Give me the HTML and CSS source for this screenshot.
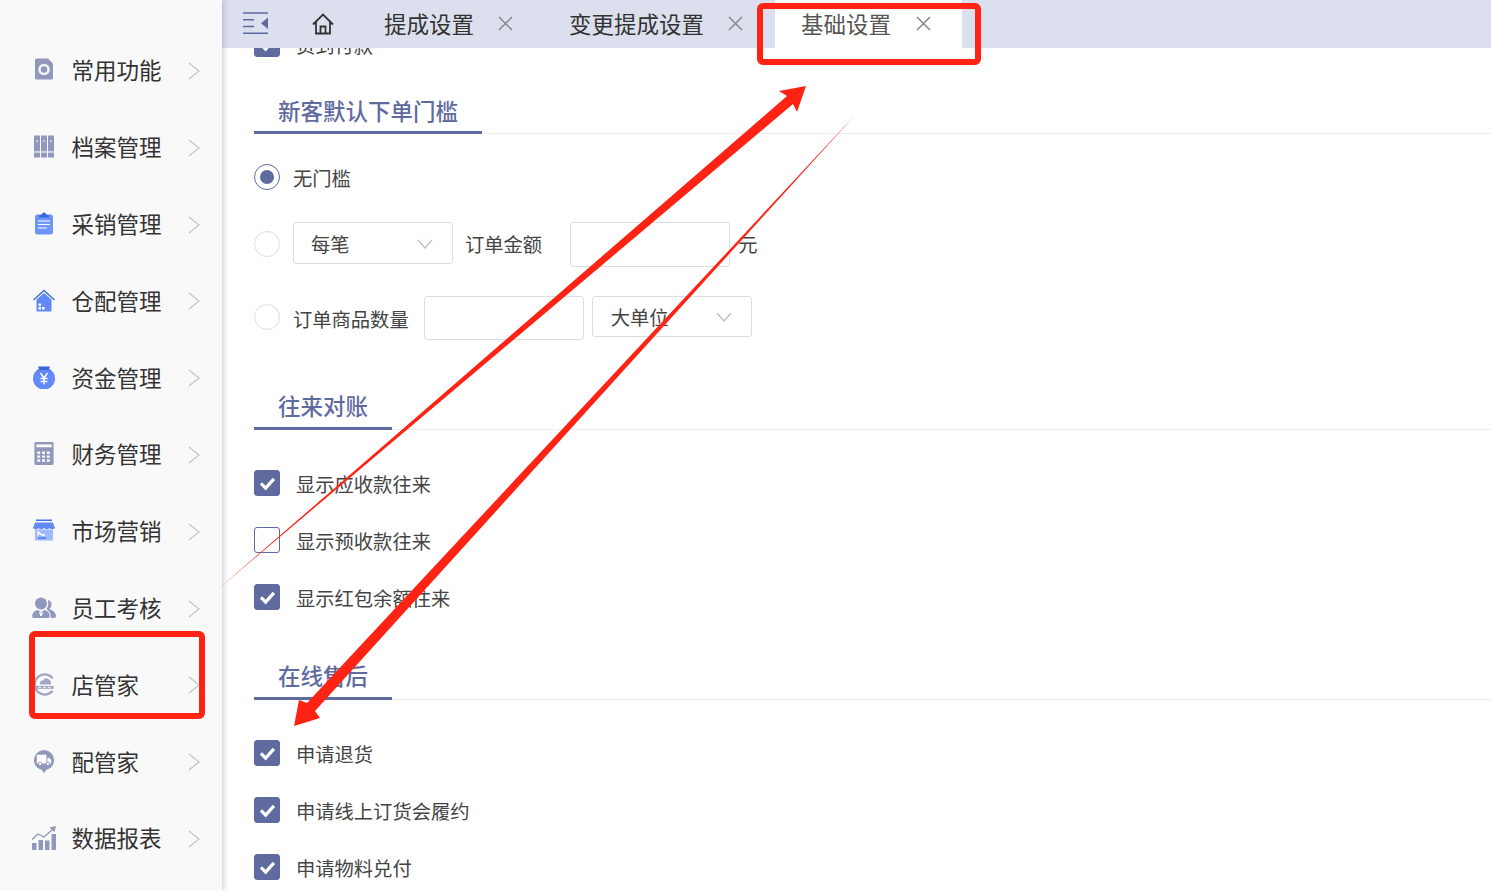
FILE: index.html
```html
<!DOCTYPE html>
<html lang="zh-CN">
  <head>
    <meta charset="UTF-8" />
    <title>基础设置</title>
    <link rel="stylesheet" href="styles.css">
  </head>
  <body>
    <div class="app">
      <!-- Sidebar -->
      <nav class="sidebar">
        <div class="menu-item">
          <svg class="menu-icon" viewBox="0 0 22 22"><path fill="#9198bb" d="M4 0H15L20 5V19.500Q20 21 18.500 21H3.500Q2 21 2 19.500V1.500Q2 0 4 0Z"/><circle cx="11" cy="11" r="4.500" fill="none" stroke="#f3f4f8" stroke-width="2.500"/></svg>
          <span class="menu-text">常用功能</span>
          <svg class="chevron" viewBox="0 0 12 20"><path d="M1 2L11 10L1 18"/></svg>
        </div>
        <div class="menu-item">
          <svg class="menu-icon" viewBox="0 0 22 22"><path fill="#9198bb" d="M1 0H7V22H1ZM8 0H14V22H8ZM15 0H21V22H15Z"/><path stroke="#f9f9f9" stroke-width="1.200" d="M1 16.500H21"/><path stroke="#f9f9f9" d="M3 5.500H5M10 5.500H12M17 5.500H19"/></svg>
          <span class="menu-text">档案管理</span>
          <svg class="chevron" viewBox="0 0 12 20"><path d="M1 2L11 10L1 18"/></svg>
        </div>
        <div class="menu-item">
          <svg class="menu-icon" viewBox="0 0 22 22"><rect x="2" y="2" width="18" height="20" rx="2.500" fill="#6f95f8"/><path fill="#3568d8" d="M6 2.500H8.500Q9 0 11 0T13.500 2.500H16V5H6Z"/><path stroke="#fff" stroke-width="1.200" d="M5 8.500H17M5 12H17M5 15.500H14"/></svg>
          <span class="menu-text">采销管理</span>
          <svg class="chevron" viewBox="0 0 12 20"><path d="M1 2L11 10L1 18"/></svg>
        </div>
        <div class="menu-item">
          <svg class="menu-icon" viewBox="0 0 22 22"><path fill="#6288f9" d="M3.500 10L11 3.500L18.500 10V21Q18.500 22 17.500 22H4.500Q3.500 22 3.500 21Z"/><path fill="none" stroke="#3568d8" stroke-width="1.300" d="M.500 10.500L11 1L21.500 10.500"/><path fill="#fff" d="M5.500 14H8V16.500H5.500ZM5.500 17.500H8V20H5.500ZM9 17.500H11.500V20H9Z"/></svg>
          <span class="menu-text">仓配管理</span>
          <svg class="chevron" viewBox="0 0 12 20"><path d="M1 2L11 10L1 18"/></svg>
        </div>
        <div class="menu-item">
          <svg class="menu-icon" viewBox="0 0 22 22"><circle cx="11" cy="12" r="11" fill="#6288f9"/><path fill="#3568d8" d="M5 0H17L15.500 3.500H6.500Z"/><path fill="none" stroke="#fff" stroke-width="1.400" d="M7.500 6.500L11 11.500L14.500 6.500M11 11.500V18M7.500 12H14.500M7.500 15H14.500"/></svg>
          <span class="menu-text">资金管理</span>
          <svg class="chevron" viewBox="0 0 12 20"><path d="M1 2L11 10L1 18"/></svg>
        </div>
        <div class="menu-item">
          <svg class="menu-icon" viewBox="0 0 22 24"><rect x="1" y="0" width="20" height="24" rx="1.500" fill="#9198bb"/><path fill="#fff" d="M3 2.500H19V5.500H3Z"/><path fill="#fff" d="M4 10H7V12.500H4ZM9 10H12V12.500H9ZM14 10H17V12.500H14ZM4 14H7V16.500H4ZM9 14H12V16.500H9ZM14 14H17V16.500H14ZM4 18H7V20.500H4ZM9 18H12V20.500H9ZM14 18H17V20.500H14Z"/></svg>
          <span class="menu-text">财务管理</span>
          <svg class="chevron" viewBox="0 0 12 20"><path d="M1 2L11 10L1 18"/></svg>
        </div>
        <div class="menu-item">
          <svg class="menu-icon" viewBox="0 0 22 22"><path fill="#3f74e8" d="M3 0H19V1.500H3Z"/><path fill="#6288f9" d="M2 3H20L22 8.500Q19 11 16.500 8.500Q14 11 11 8.500Q8 11 5.500 8.500Q3 11 0 8.500Z"/><rect x="2" y="10" width="18" height="11" fill="#9dbafa"/><path fill="none" stroke="#3f74e8" stroke-width="1.300" d="M5 18.500H13"/><path fill="none" stroke="#fff" stroke-width="1.500" d="M5 16V12.500L9 15.500H12"/></svg>
          <span class="menu-text">市场营销</span>
          <svg class="chevron" viewBox="0 0 12 20"><path d="M1 2L11 10L1 18"/></svg>
        </div>
        <div class="menu-item">
          <svg class="menu-icon icon-wide" viewBox="0 0 24 22"><path fill="#9198bb" d="M16 3Q20 4 19.500 8Q19 11 17 12Q23 13.500 24 19Q24 21 22 21H19Q19 15 14.500 12Q17 9 16 3Z"/><circle cx="9" cy="6.500" r="6" fill="#9198bb"/><path fill="#9198bb" d="M0 19Q1 13.500 6 13L9 15.500L12 13Q17 13.500 18 19Q18 21 16 21H2Q0 21 0 19Z"/><path fill="#f9f9f9" d="M7 15.500H11V17H10V19H8V17H7Z"/></svg>
          <span class="menu-text">员工考核</span>
          <svg class="chevron" viewBox="0 0 12 20"><path d="M1 2L11 10L1 18"/></svg>
        </div>
        <div class="menu-item">
          <svg class="menu-icon" viewBox="0 0 22 24"><path fill="none" stroke="#a0a6c4" stroke-width="2.300" d="M20 5.500A10.500 10.500 0 1 0 20 18.500"/><path fill="#a0a6c4" d="M7 12Q6 8 10 7.500Q12 4 15.500 6.500Q19 7.500 18 12Z"/><path fill="#a0a6c4" d="M2 13.500H21V16.500H2Z"/><path stroke="#f3f4f8" d="M5 15H8M10 15H13M15 15H18"/></svg>
          <span class="menu-text">店管家</span>
          <svg class="chevron" viewBox="0 0 12 20"><path d="M1 2L11 10L1 18"/></svg>
        </div>
        <div class="menu-item">
          <svg class="menu-icon" viewBox="0 0 22 24"><circle cx="11" cy="10.500" r="10.500" fill="#9198bb"/><path fill="#9198bb" d="M8 20H14L11 24Z"/><path fill="#fff" d="M3.500 5H13.500V14H3.500ZM14.500 8H16.500L18.500 10.500V14H14.500Z"/><circle cx="7" cy="14.500" r="1.800" fill="#fff" stroke="#9198bb"/><circle cx="15" cy="14.500" r="1.800" fill="#fff" stroke="#9198bb"/></svg>
          <span class="menu-text">配管家</span>
          <svg class="chevron" viewBox="0 0 12 20"><path d="M1 2L11 10L1 18"/></svg>
        </div>
        <div class="menu-item">
          <svg class="menu-icon icon-wide" viewBox="0 0 24 24"><path fill="#9198bb" d="M0 17H4.500V24H0ZM6.500 14H11V24H6.500ZM13 14.500H17.500V24H13ZM19.500 8H24V24H19.500Z"/><path fill="none" stroke="#9198bb" stroke-width="1.300" d="M0 13.500L6 8L12 11L21 3"/><path fill="#9198bb" d="M17.500 1.500L24 0L22.500 6Z"/></svg>
          <span class="menu-text">数据报表</span>
          <svg class="chevron" viewBox="0 0 12 20"><path d="M1 2L11 10L1 18"/></svg>
        </div>
      </nav>

      <div class="main">
        <!-- Tabs -->
        <header class="tabbar">
          <svg class="toggle" viewBox="0 0 25 22"><path fill="none" stroke="#5e6a9e" stroke-width="1.400" d="M0 1H25M0 7.800H11M0 14.500H11M0 21.300H25"/><path fill="#5e6a9e" d="M25 5.500V17L18 11.200Z"/></svg>
          <svg class="home" viewBox="0 0 22 22"><path fill="none" stroke="#333" stroke-width="1.800" d="M1 11.500L11 1.500L21 11.500M4 8.500V20.500H18V8.500M8.500 20.500V13.500H13.500V20.500"/></svg>
          <div class="tab">
            <span>提成设置</span>
            <svg class="tab-close" viewBox="0 0 15 15"><path d="M1 1L14 14M14 1L1 14"/></svg>
          </div>
          <div class="tab">
            <span>变更提成设置</span>
            <svg class="tab-close" viewBox="0 0 15 15"><path d="M1 1L14 14M14 1L1 14"/></svg>
          </div>
          <div class="tab tab-active">
            <span>基础设置</span>
            <svg class="tab-close" viewBox="0 0 15 15"><path d="M1 1L14 14M14 1L1 14"/></svg>
          </div>
        </header>

        <!-- Settings, scrolled a little under the tabs -->
        <div class="content">
          <div class="scroll">
            <label class="check-row">
              <span class="check on"><svg viewBox="0 0 26 26"><path d="M6.500 13.500L11.500 18.500L20.500 8.500"/></svg></span>
              <span class="check-label">货到付款</span>
            </label>

            <section class="section first">
              <h2 class="section-title"><span>新客默认下单门槛</span></h2>
              <div class="form-row row-none">
                <span class="radio on"></span>
                <span class="form-label">无门槛</span>
              </div>
              <div class="form-row row-amount">
                <span class="radio"></span>
                <div class="select sel-each"><span>每笔</span><svg viewBox="0 0 16 10"><path d="M1 1L8 9L15 1"/></svg></div>
                <span class="form-label">订单金额</span>
                <input class="text-input input-amount" type="text" />
                <span class="form-label">元</span>
              </div>
              <div class="form-row row-count">
                <span class="radio"></span>
                <span class="form-label">订单商品数量</span>
                <input class="text-input input-count" type="text" />
                <div class="select sel-unit"><span>大单位</span><svg viewBox="0 0 16 10"><path d="M1 1L8 9L15 1"/></svg></div>
              </div>
            </section>

            <section class="section account">
              <h2 class="section-title"><span>往来对账</span></h2>
              <div class="check-list">
                <label class="check-row">
                  <span class="check on"><svg viewBox="0 0 26 26"><path d="M6.500 13.500L11.500 18.500L20.500 8.500"/></svg></span>
                  <span class="check-label">显示应收款往来</span>
                </label>
                <label class="check-row">
                  <span class="check"></span>
                  <span class="check-label">显示预收款往来</span>
                </label>
                <label class="check-row">
                  <span class="check on"><svg viewBox="0 0 26 26"><path d="M6.500 13.500L11.500 18.500L20.500 8.500"/></svg></span>
                  <span class="check-label">显示红包余额往来</span>
                </label>
              </div>
            </section>

            <section class="section service">
              <h2 class="section-title"><span>在线售后</span></h2>
              <div class="check-list">
                <label class="check-row">
                  <span class="check on"><svg viewBox="0 0 26 26"><path d="M6.500 13.500L11.500 18.500L20.500 8.500"/></svg></span>
                  <span class="check-label">申请退货</span>
                </label>
                <label class="check-row">
                  <span class="check on"><svg viewBox="0 0 26 26"><path d="M6.500 13.500L11.500 18.500L20.500 8.500"/></svg></span>
                  <span class="check-label">申请线上订货会履约</span>
                </label>
                <label class="check-row">
                  <span class="check on"><svg viewBox="0 0 26 26"><path d="M6.500 13.500L11.500 18.500L20.500 8.500"/></svg></span>
                  <span class="check-label">申请物料兑付</span>
                </label>
              </div>
            </section>
          </div>
        </div>
      </div>
    </div>

    <!-- Red marks drawn over the screenshot -->
    <svg class="marks" viewBox="0 0 1491 891">
      <rect x="760" y="6" width="218" height="56" rx="3" />
      <rect x="32" y="634" width="170" height="82" rx="3" />
      <polygon points="217,590 787,96 779,91 806,86 797,112 793,104" />
      <polygon points="856,114 307,703 299,700 294,726 320,718 315,711" />
    </svg>
  </body>
</html>
```

FILE: styles.css
```css
* {
  margin: 0;
  padding: 0;
  box-sizing: border-box;
}

body {
  width: 1491px;
  height: 891px;
  overflow: hidden;
  background: #fff;
  color: #333;
  font-family: "Noto Sans CJK SC", "Liberation Sans", sans-serif;
}

.app {
  display: flex;
  height: 891px;
}

/* Sidebar */
.sidebar {
  position: relative;
  z-index: 2;
  flex: 0 0 222px;
  padding-top: 32.6px;
  background: #f9f9f9;
  box-shadow: 1px 0 6px rgba(60, 70, 110, 0.3);
}

.menu-item {
  display: flex;
  align-items: center;
  height: 76.8px;
  padding-left: 33px;
}

.menu-icon {
  flex: 0 0 22px;
  width: 22px;
  height: 23px;
  margin-top: -2px;
}

.icon-wide {
  flex-basis: 24px;
  width: 24px;
  height: 24px;
  margin-left: -1px;
  margin-right: -1px;
}

.menu-text {
  flex: 1;
  margin: -3px 0 0 16.5px;
  font-size: 22.5px;
  line-height: 30px;
  color: #333;
}

.chevron {
  width: 12px;
  height: 20px;
  margin-right: 22px;
  fill: none;
  stroke: #c4c6ce;
  stroke-width: 1.4;
}

/* Tabs */
.main {
  flex: 1;
  display: flex;
  flex-direction: column;
  min-width: 0;
}

.tabbar {
  position: relative;
  z-index: 1;
  flex: 0 0 48px;
  display: flex;
  background: #dce0ee;
}

.toggle {
  width: 25px;
  height: 22px;
  margin: 12px 0 0 21px;
}

.home {
  width: 22px;
  height: 22px;
  margin: 13px 24px 0 44px;
}

.tab {
  display: flex;
  align-items: flex-start;
  padding: 8px 30px 0 26px;
  font-size: 22.5px;
  line-height: 30px;
  color: #333;
}

.tab-close {
  width: 15px;
  height: 15px;
  margin: 8px 0 0 24px;
  fill: none;
  stroke: #888;
  stroke-width: 1.5;
}

.tab-active {
  margin-left: 2px;
  padding-right: 31px;
  background: #fff;
  color: #555;
}

.tab-active .tab-close {
  margin-left: 25px;
}

/* Content */
.content {
  flex: 1;
  overflow: hidden;
}

.scroll {
  margin-top: -33px;
  padding-left: 32px;
}

.section.first {
  margin-top: 17px;
}

.section.first .section-title {
  line-height: 43px;
}

.section.account {
  margin-top: 45px;
}

.section.service {
  margin-top: 30px;
}

.section-title {
  height: 45px;
  border-bottom: 1px solid #ececf0;
  font-weight: 500;
  font-size: 22.5px;
  line-height: 41px;
  color: #5f6b9f;
}

.section-title span {
  display: inline-block;
  height: 45px;
  padding: 0 24px;
  border-bottom: 3px solid #5f6b9f;
}

.form-row {
  display: flex;
  align-items: flex-start;
  font-size: 19.3px;
}

.row-none {
  margin-top: 30px;
}

.row-amount {
  margin-top: 31px;
}

.row-count {
  margin-top: 29px;
}

.radio {
  flex: 0 0 26px;
  position: relative;
  width: 26px;
  height: 26px;
  border: 1px solid #dcdde2;
  border-radius: 50%;
  background: #fff;
}

.radio.on {
  border-color: #5f6b9f;
}

.radio.on::after {
  content: "";
  position: absolute;
  top: 5px;
  left: 5px;
  width: 14px;
  height: 14px;
  border-radius: 50%;
  background: #5f6b9f;
}

.form-label {
  line-height: 26px;
  color: #444;
}

.row-none .form-label {
  margin-left: 13px;
  margin-top: 1px;
}

.row-amount .radio {
  margin-top: 9px;
}

.row-amount .form-label {
  margin: 9px 0 0 12px;
}

.row-amount .form-label:last-child {
  margin-left: 8px;
}

.row-count .radio {
  margin-top: 8px;
}

.row-count .form-label {
  margin: 10px 0 0 13px;
}

.select {
  display: flex;
  align-items: center;
  justify-content: space-between;
  width: 160px;
  padding: 0 19px 0 17px;
  border: 1px solid #dcdde2;
  border-radius: 3px;
  background: #fff;
  color: #444;
}

.select svg {
  width: 16px;
  height: 10px;
  fill: none;
  stroke: #bfc0c6;
  stroke-width: 1.3;
}

.sel-each {
  height: 42px;
  padding-top: 2px;
  margin-left: 13px;
}

.sel-unit {
  height: 41px;
  padding-left: 18px;
  margin-left: 8px;
}

.text-input {
  width: 160px;
  border: 1px solid #dcdde2;
  border-radius: 3px;
  background: #fff;
}

.input-amount {
  height: 45px;
  margin-left: 28px;
}

.input-count {
  height: 44px;
  margin-left: 15px;
}

.check-list {
  margin-top: 24px;
}

.check-row {
  display: flex;
  align-items: flex-start;
  height: 57px;
  padding-top: 16px;
}

.check {
  flex: 0 0 26px;
  width: 26px;
  height: 26px;
  border: 1px solid #5f6b9f;
  border-radius: 3px;
  background: #fff;
}

.check.on {
  background: #5f6b9f;
}

.check svg {
  display: block;
  width: 24px;
  height: 24px;
  fill: none;
  stroke: #fff;
  stroke-width: 3.5;
}

.check-label {
  margin-left: 16px;
  font-size: 19.3px;
  line-height: 28px;
  color: #444;
}

/* Annotation overlay */
.marks {
  position: absolute;
  top: 0;
  left: 0;
  z-index: 5;
  width: 1491px;
  height: 891px;
  pointer-events: none;
}

.marks rect {
  fill: none;
  stroke: #ff2314;
  stroke-width: 6;
}

.marks polygon {
  fill: #ff2314;
}
```
